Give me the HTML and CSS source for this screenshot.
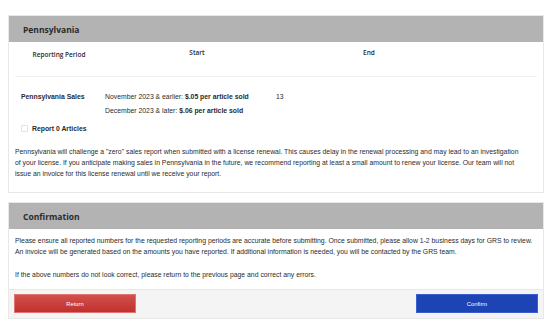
FILE: index.html
```html
<!DOCTYPE html>
<html>
<head>
<meta charset="utf-8">
<link rel="stylesheet" href="styles.css">
</head>
<body>
<div class="page">
  <section class="card">
    <div class="card-head">Pennsylvania</div>
    <div class="card-body">
      <div class="cols">
        <div class="col-h h1">Reporting Period</div>
        <div class="col-h h2">Start</div>
        <div class="col-h h3">End</div>
      </div>
      <div class="row">
        <div class="row-label">Pennsylvania Sales</div>
        <div class="prices">
          <div>November 2023 &amp; earlier: <b>$.05 per article sold</b></div>
          <div>December 2023 &amp; later: <b>$.06 per article sold</b></div>
        </div>
        <div class="qty">13</div>
      </div>
      <label class="zero"><span class="box"></span>Report 0 Articles</label>
      <p class="note">Pennsylvania will challenge a "zero" sales report when submitted with a license renewal. This causes delay in the renewal processing and may lead to an investigation of your license. If you anticipate making sales in Pennsylvania in the future, we recommend reporting at least a small amount to renew your license. Our team will not issue an invoice for this license renewal until we receive your report.</p>
    </div>
  </section>
  <section class="card">
    <div class="card-head">Confirmation</div>
    <div class="card-body conf">
      <p>Please ensure all reported numbers for the requested reporting periods are accurate before submitting. Once submitted, please allow 1-2 business days for GRS to review. An invoice will be generated based on the amounts you have reported. If additional information is needed, you will be contacted by the GRS team.</p>
      <p>If the above numbers do not look correct, please return to the previous page and correct any errors.</p>
    </div>
    <div class="card-foot">
      <button class="btn btn-return">Return</button>
      <button class="btn btn-confirm">Confirm</button>
    </div>
  </section>
</div>
</body>
</html>
```
FILE: styles.css
```css
html, body { margin: 0; padding: 0; background: #fff; }
body {
  font-family: "Liberation Sans", Arial, sans-serif;
  font-size: 6.85px;
  color: #2b2b2b;
}
.page {
  width: 536px;
  padding: 15px 0 0 8px;
  display: flex;
  flex-direction: column;
  gap: 9px;
}
.card {
  border: 1px solid #e8e8e8;
  background: #fff;
}
.card-head {
  background: #b3b3b3;
  height: 26px;
  display: flex;
  align-items: center;
  padding-left: 14px;
  font-family: "Open Sans", sans-serif;
  font-weight: 700;
  font-size: 8.5px;
  color: #2a2a2a;
}
.card-body { padding: 0 6px 0 6px; }
.cols {
  display: grid;
  grid-template-columns: 88px 188px 156px 1fr;
  height: 34px;
  border-bottom: 1px solid #efefef;
  font-family: "Open Sans", sans-serif;
  font-weight: 600;
  font-size: 6.5px;
  color: #2a2a2a;
}
.col-h { text-align: center; }
.h1 { padding-top: 8px; }
.h2, .h3 { padding-top: 6px; }
.row {
  display: grid;
  grid-template-columns: 84px 171px 1fr;
  padding: 13px 0 0 6px;
  line-height: 14px;
}
.row-label { font-weight: 700; }
.zero {
  display: flex;
  align-items: center;
  gap: 4px;
  padding: 4px 0 0 6px;
  font-weight: 700;
  height: 12px;
}
.box {
  width: 5px;
  height: 5px;
  border: 1px solid #e2e2e2;
  border-radius: 1px;
  background: #fff;
}
.note {
  margin: 12px 0 0 0;
  line-height: 11px;
  padding: 0 16px 13px 0;
}
.conf { padding: 6px 6px 9px 6px; }
.conf p { margin: 0 0 12px 0; line-height: 11px; }
.conf p:last-child { margin-bottom: 0; }
.card-foot {
  background: #f4f4f4;
  border-top: 1px solid #e8e8e8;
  display: flex;
  justify-content: space-between;
  padding: 4px 5px 5px 5px;
}
.btn {
  width: 122px;
  height: 19px;
  border: 1px solid transparent;
  font-family: "Liberation Sans", Arial, sans-serif;
  font-size: 5.8px;
  color: #fff;
  padding: 0;
}
.btn-return {
  background: linear-gradient(#d2504d, #c0312e);
  border-color: #e07470;
}
.btn-confirm {
  background: #1e43b4;
  border-color: #3a5fcf;
}
```
